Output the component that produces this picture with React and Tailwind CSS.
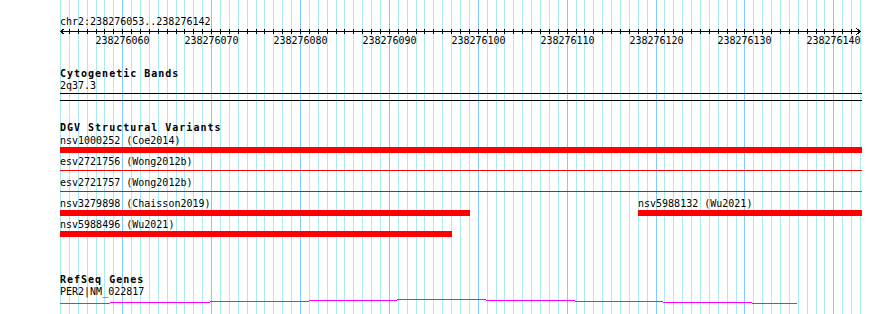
import React from 'react';

const START = 238276053;
const LEFT = 60;
const STEP = 800 / 90;

function gx(i) {
  return Math.round(LEFT + i * STEP);
}

const VARIANT_ROWS = [
  [{ name: 'nsv1000252', study: 'Coe2014', start: 60, end: 862, thick: true }],
  [{ name: 'esv2721756', study: 'Wong2012b', start: 60, end: 862, thick: false }],
  [{ name: 'esv2721757', study: 'Wong2012b', start: 60, end: 862, thick: false }],
  [
    { name: 'nsv3279898', study: 'Chaisson2019', start: 60, end: 470, thick: true },
    { name: 'nsv5988132', study: 'Wu2021', start: 638, end: 862, thick: true },
  ],
  [{ name: 'nsv5988496', study: 'Wu2021', start: 60, end: 452, thick: true }],
];

// gene line drawn as small steps: [x1, x2, y]
const GENE_STEPS = [
  [60, 110, 303],
  [110, 210, 302],
  [210, 309, 301],
  [309, 397, 300],
  [397, 486, 299],
  [486, 575, 300],
  [575, 663, 301],
  [663, 752, 302],
  [752, 797, 303],
];

function Guidelines() {
  return (
    <svg className="absolute left-0 top-0" width="890" height="314">
      {Array.from({ length: 91 }, (_, i) => (
        <rect
          key={i}
          x={gx(i)}
          y={0}
          width={1}
          height={314}
          fill={i % 10 === 7 ? '#86c9ef' : '#aee9f0'}
        />
      ))}
    </svg>
  );
}

function Ruler() {
  return (
    <svg width="802" height="7" className="block" shapeRendering="crispEdges">
      <rect x={0} y={3} width={801} height={1} fill="#000" />
      {Array.from({ length: 89 }, (_, i) => (
        <rect key={i} x={gx(i + 1) - LEFT} y={1} width={1} height={5} fill="#000" />
      ))}
      <path d="M0.5 3.5 L4.5 0.5 M0.5 3.5 L4.5 6.5" stroke="#000" fill="none" />
      <path d="M800.5 3.5 L796.5 0.5 M800.5 3.5 L796.5 6.5" stroke="#000" fill="none" />
    </svg>
  );
}

function RulerLabels() {
  const labels = Array.from({ length: 9 }, (_, k) => 7 + k * 10);
  return (
    <div className="relative h-[12px] leading-[12px]">
      {labels.map((i) => (
        <span
          key={i}
          className="absolute top-0 -translate-x-1/2 whitespace-nowrap"
          style={{ left: gx(i) - LEFT + 0.5 }}
        >
          {START + i}
        </span>
      ))}
    </div>
  );
}

function TrackTitle({ children, className = '' }) {
  return (
    <div className={`h-[12px] leading-[12px] font-bold tracking-[1px] whitespace-nowrap ${className}`}>
      {children}
    </div>
  );
}

function VariantRow({ features }) {
  return (
    <div className="relative h-[21px]">
      {features.map((f) => (
        <div
          key={f.name}
          className="absolute top-0"
          style={{ left: f.start - LEFT, width: f.end - f.start }}
        >
          <div className="h-[12px] leading-[12px] whitespace-nowrap">
            {f.name} ({f.study})
          </div>
          {f.thick ? (
            <div className="h-[6px] bg-[#ff0000]" />
          ) : (
            <div className="mt-[2px] h-[1px] bg-[#ff0000]" />
          )}
        </div>
      ))}
    </div>
  );
}

function GeneLine() {
  return (
    <svg width="802" height="8" className="block" shapeRendering="crispEdges">
      {GENE_STEPS.map(([x1, x2, y]) => (
        <rect key={x1} x={x1 - LEFT} y={y - 298} width={x2 - x1} height={1} fill="#ff00ff" />
      ))}
    </svg>
  );
}

export default function App() {
  return (
    <div className="relative w-[890px] h-[314px] overflow-hidden bg-white text-black text-[10px] font-['DejaVu_Sans_Mono','Liberation_Mono',monospace]">
      <Guidelines />

      <div className="relative ml-[60px] w-[802px] flex flex-col pt-[16px]">
        {/* Position + ruler */}
        <div className="h-[12px] leading-[12px] whitespace-nowrap">chr2:238276053..238276142</div>
        <Ruler />
        <RulerLabels />

        {/* Cytogenetic Bands */}
        <TrackTitle className="mt-[21px]">Cytogenetic Bands</TrackTitle>
        <div className="h-[12px] leading-[12px]">2q37.3</div>
        <div className="mt-[1px] h-[1px] bg-black" />
        <div className="mt-[6px] h-[1px] bg-black" />

        {/* DGV Structural Variants */}
        <TrackTitle className="mt-[21px]">DGV Structural Variants</TrackTitle>
        <div className="mt-[1px] flex flex-col">
          {VARIANT_ROWS.map((row, i) => (
            <VariantRow key={i} features={row} />
          ))}
        </div>

        {/* RefSeq Genes */}
        <TrackTitle className="mt-[34px]">RefSeq Genes</TrackTitle>
        <div className="h-[12px] leading-[12px]">PER2|NM_022817</div>
        <GeneLine />
      </div>
    </div>
  );
}
